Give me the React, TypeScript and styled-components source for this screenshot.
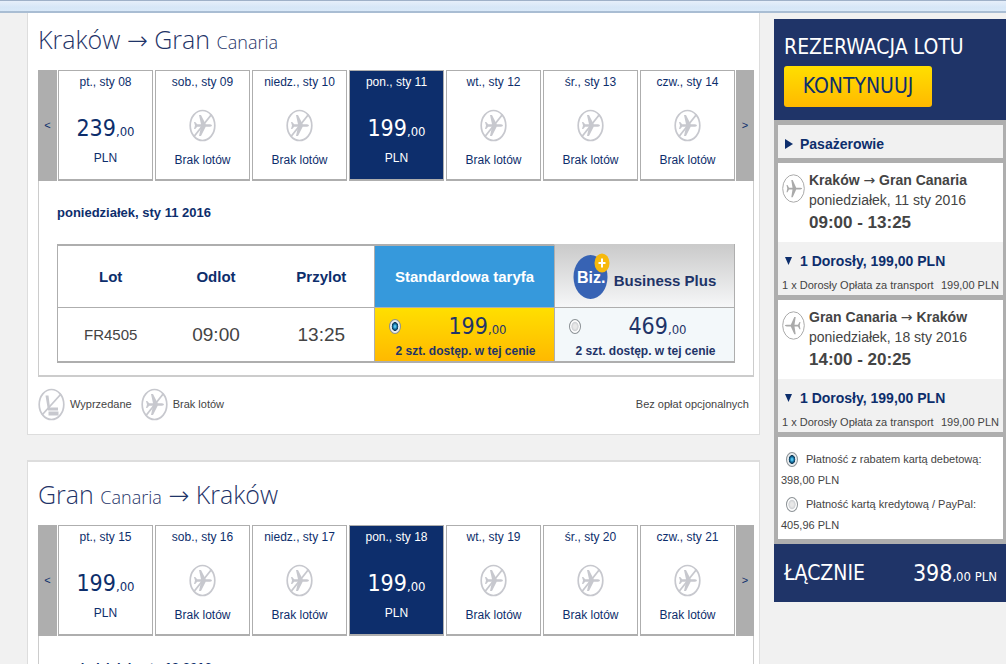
import React, { useState } from "react";
import styled, { createGlobalStyle, css } from "styled-components";

const navy = "#0d2e6c";
const panelNavy = "#1f3468";
const grey = "#aeaeae";
const ink = "#444";
const sans = `"Liberation Sans", Arial, sans-serif`;
const display = `"DejaVu Sans Condensed", "DejaVu Sans", Verdana, sans-serif`;

const GlobalStyle = createGlobalStyle`
  *, *::before, *::after { box-sizing: border-box; }
  html { scrollbar-width: none; }
  body { margin: 0; background: #f1f1f1; color: ${ink}; font: 12px/16px ${sans}; }
  button { font: inherit; color: inherit; margin: 0; padding: 0; border: 0; background: none; cursor: pointer; }
  h1, h2, h3, p { margin: 0; font-weight: normal; }
  svg { flex: none; }
`;

const BrowserEdge = styled.div`
  height: 13px;
  border-top: 1px solid #9fb1c8;
  border-bottom: 2px solid #a9bdd3;
  background: linear-gradient(#e6effa, #d7e7f7 60%, #d9e9f9);
`;

const Page = styled.div`
  display: grid;
  grid-template-columns: minmax(0, 1fr) 232px;
  column-gap: 14px;
  align-items: start;
  padding-left: 27px;
`;

const Flights = styled.main`
  display: flex;
  flex-direction: column;
  gap: 25px;
`;

const Card = styled.section<{ $clipped?: boolean }>`
  padding: ${(p) => (p.$clipped ? "5px" : "11px")} 5px 13px 10px;
  border: 1px solid #ddd;
  border-top: ${(p) => (p.$clipped ? "0" : "2px solid #ddd")};
  background: #fff;
`;

const Route = styled.h2`
  height: 52px;
  color: ${panelNavy};
  font: 300 25px/42px "Open Sans", "Noto Sans", sans-serif;
  white-space: nowrap;
  small { font-size: 18px; }
`;

const Arrow = styled.span`
  font-family: "DejaVu Sans", "Liberation Sans", sans-serif;
  font-weight: 200;
  line-height: 1;
`;

const Days = styled.div`
  display: grid;
  grid-template-columns: 19px minmax(0, 1fr) 18px;
  column-gap: 1px;
  height: 111px;
`;

const DayList = styled.div`
  display: grid;
  grid-template-columns: repeat(7, minmax(0, 1fr));
  column-gap: 2px;
`;

const Shift = styled.button`
  padding-bottom: 2px;
  background: ${grey};
  color: ${navy};
  font-size: 11px;
`;

const Day = styled.button<{ $active?: boolean }>`
  display: flex;
  flex-direction: column;
  align-items: center;
  padding-top: 3px;
  border: 1px solid ${grey};
  border-bottom-width: 2px;
  color: ${(p) => (p.$active ? "#fff" : navy)};
  background: ${(p) => (p.$active ? navy : "#fff")};
`;

const DayPrice = styled.span`
  display: flex;
  flex-direction: column;
  align-items: center;
  gap: 6px;
  padding-top: 22px;
`;

const Closed = styled.span`
  display: flex;
  flex-direction: column;
  align-items: center;
  gap: 10px;
  padding-top: 19px;
`;

const Amount = styled.span`
  font: 23px/32px ${display};
  white-space: nowrap;
  small { font-size: 13px; line-height: 1; }
`;

const Details = styled.div`
  padding: 24px 18px 12px;
  border: 1px solid #ccc;
  border-top: 0;
  border-bottom-width: 2px;
`;

const DateTitle = styled.h3`
  margin-bottom: 23px;
  color: ${navy};
  font: bold 13px/16px ${sans};
`;

const FareTable = styled.table`
  width: 100%;
  table-layout: fixed;
  border-collapse: separate;
  border-spacing: 0;
  border: 1px solid ${grey};
  border-top: 0;
  border-bottom-width: 2px;
  th, td { padding: 0; text-align: center; }
  th {
    height: 64px;
    border-top: 2px solid ${grey};
    border-bottom: 1px solid ${grey};
    color: ${navy};
    font-size: 15px;
    white-space: nowrap;
  }
  td { height: 53px; font-size: 19px; }
`;

const fareEdge = css`border-left: 1px solid ${grey};`;

const StandardHead = styled.th`
  ${fareEdge}
  && { color: #fff; }
  background: #3699dc;
`;

const BusinessHead = styled.th`
  ${fareEdge}
  && { border-top-color: #cbcbcb; color: ${panelNavy}; }
  background: linear-gradient(#cbcbcb, #f6f7f8);
`;

const BusinessTitle = styled.span`
  display: flex;
  align-items: center;
  justify-content: center;
  gap: 4px;
  span { padding-top: 8px; }
`;

const FareCell = styled.td<{ $picked?: boolean }>`
  ${fareEdge}
  color: ${panelNavy};
  background: ${(p) => (p.$picked ? "linear-gradient(#ffdf00, #ffb900)" : "#f3f8fa")};
`;

const FlightNo = styled.td`
  && { font-size: 15px; }
`;

const FareLabel = styled.label`
  display: grid;
  grid-template-columns: 12px 1fr;
  grid-template-rows: 32px 18px;
  padding: 1px 0 0 14px;
  align-items: center;
  cursor: pointer;
  strong { grid-column: 1 / 3; padding-right: 12px; font-size: 12px; line-height: 18px; white-space: nowrap; }
`;

const Radio = styled.input.attrs({ type: "radio" })`
  appearance: none;
  flex: none;
  width: 12px;
  height: 15px;
  margin: 0;
  border: 1px solid #8c9296;
  border-radius: 50%;
  background: radial-gradient(closest-side, #e8e8e8 0 30%, #cfd1d4 65%, #fff 80%);
  &:checked {
    background: radial-gradient(closest-side, #55c4ee 0 15%, #126e9f 40%, #123650 62%, #e9edf0 72%);
  }
`;

const Legend = styled.div`
  display: flex;
  align-items: center;
  padding: 10px 5px 0 0;
  height: 44px;
  font-size: 11px;
`;

const LegendItem = styled.span`
  display: flex;
  align-items: center;
  gap: 5px;
  margin-right: 9px;
`;

const Note = styled.span`
  margin-left: auto;
`;

const Sidebar = styled.aside`
  margin-top: 6px;
`;

const BookingHead = styled.header`
  height: 101px;
  padding: 13px 10px;
  background: ${panelNavy};
  color: #fff;
`;

const BookingTitle = styled.h1`
  margin-bottom: 4px;
  font: 21px/30px ${display};
  white-space: nowrap;
`;

const Continue = styled.button`
  width: 148px;
  height: 41px;
  border-radius: 3px;
  background: linear-gradient(#ffdf00, #ffb900);
  color: ${navy};
  font: 21px/41px ${display};
`;

const Summary = styled.div`
  display: flex;
  flex-direction: column;
  gap: 5px;
  padding: 5px 3px 5px 4px;
  background: ${grey};
`;

const Block = styled.div`
  background: #fff;
`;

const Toggle = styled.button`
  display: flex;
  align-items: center;
  gap: 7px;
  width: 100%;
  height: 33px;
  padding: 5px 7px 0;
  background: #f1f1f1;
  color: ${navy};
  font-size: 14px;
  font-weight: bold;
  line-height: 20px;
`;

const Leg = styled.div`
  display: flex;
  gap: 4px;
  height: 79px;
  padding: 7px 4px;
  svg { margin-top: 4px; }
`;

const LegText = styled.div`
  font-size: 14px;
  line-height: 20px;
  white-space: nowrap;
  h3 { font-size: 14px; font-weight: bold; }
  time { display: block; font-size: 17px; line-height: 26px; font-weight: bold; }
  ${Arrow} { font-weight: normal; }
`;

const Fee = styled.p`
  display: flex;
  justify-content: space-between;
  height: 20px;
  padding: 2px 4px;
  background: #f1f1f1;
  font-size: 11px;
  white-space: nowrap;
`;

const Payments = styled.div`
  height: 102px;
  padding: 12px 3px 0;
`;

const Payment = styled.label`
  display: block;
  height: 45px;
  line-height: 21px;
  white-space: nowrap;
  font-size: 11px;
  cursor: pointer;
`;

const PaymentName = styled.span`
  display: flex;
  align-items: center;
  gap: 8px;
  padding-left: 5px;
`;

const Total = styled.footer`
  display: flex;
  justify-content: space-between;
  align-items: center;
  height: 58px;
  padding: 0 9px 0 10px;
  background: ${panelNavy};
  color: #fff;
  font: 21px/32px ${display};
`;

const NoFlightIcon = () => (
  <svg width="27" height="33" viewBox="0 0 27 33" fill="none" aria-hidden="true">
    <ellipse cx="13.5" cy="16.5" rx="12.3" ry="15" stroke="#c7c8ce" strokeWidth="1.7" />
    <path d="M5 27.5 22.5 5.5" stroke="#c7c8ce" strokeWidth="1.8" />
    <path d="M5 13h1.200l2 2.300h3.800L10 6h2l4.700 9.300h4.300q2 .3 2 1.200t-2 1.200h-4.300L12 27h-2l2-9.300H8.200l-2 2.300H5l1-3.500z" fill="#c7c8ce" />
  </svg>
);

const SoldOutIcon = () => (
  <svg width="27" height="33" viewBox="0 0 27 33" fill="none" aria-hidden="true">
    <ellipse cx="13.5" cy="16.5" rx="12.3" ry="15" stroke="#c7c8ce" strokeWidth="1.7" />
    <path d="M4 27 23 6" stroke="#c7c8ce" strokeWidth="1.8" />
    <path d="M7.500 7.500h3l1.500 12h8v3h-10z" fill="#c7c8ce" />
    <path d="M10.500 23.500h10v4h-10z" fill="#c7c8ce" />
  </svg>
);

const PlaneIcon = ({ back }: { back?: boolean }) => (
  <svg width="23" height="29" viewBox="0 0 23 29" fill="none" aria-hidden="true">
    <ellipse cx="11.5" cy="14.5" rx="10.8" ry="13.7" stroke="#aaa" />
    <path
      transform={back ? "matrix(-1 0 0 1 23 0)" : undefined}
      d="M4.500 11h1l1.500 2.800h3.500L9.300 6h1.400l3.500 7.800h4q2 0 2 .8t-2 .8h-4l-3.500 7.800H9.300l1.200-7.800H7l-1.500 2.800h-1l.8-3.600z"
      fill="#aaa"
    />
  </svg>
);

const BizBadge = () => (
  <svg width="37" height="47" viewBox="0 0 37 47" role="img" aria-label="Biz+">
    <ellipse cx="17.5" cy="24" rx="17" ry="22" fill="#3763b4" />
    <text x="4" y="30" fill="#fff" fontFamily="Liberation Sans, Arial, sans-serif" fontWeight="bold" fontSize="16">Biz.</text>
    <ellipse cx="29" cy="10" rx="7.5" ry="9.5" fill="#f7b90c" />
    <path d="M29 5.500v9M25.500 10h7" stroke="#fff" strokeWidth="2" />
  </svg>
);

type DayInfo = { label: string; price?: string };

const outbound: DayInfo[] = [
  { label: "pt., sty 08", price: "239" },
  { label: "sob., sty 09" },
  { label: "niedz., sty 10" },
  { label: "pon., sty 11", price: "199" },
  { label: "wt., sty 12" },
  { label: "śr., sty 13" },
  { label: "czw., sty 14" },
];

const inbound: DayInfo[] = [
  { label: "pt., sty 15", price: "199" },
  { label: "sob., sty 16" },
  { label: "niedz., sty 17" },
  { label: "pon., sty 18", price: "199" },
  { label: "wt., sty 19" },
  { label: "śr., sty 20" },
  { label: "czw., sty 21" },
];

const DayPicker = ({ days }: { days: DayInfo[] }) => (
  <Days>
    <Shift type="button">&lt;</Shift>
    <DayList>
      {days.map((d, i) => (
        <Day key={d.label} type="button" $active={i === 3}>
          {d.label}
          {d.price ? (
            <DayPrice>
              <Amount>{d.price}<small>,00</small></Amount>
              <span>PLN</span>
            </DayPrice>
          ) : (
            <Closed>
              <NoFlightIcon />
              <span>Brak lotów</span>
            </Closed>
          )}
        </Day>
      ))}
    </DayList>
    <Shift type="button">&gt;</Shift>
  </Days>
);

const Marker = ({ open }: { open?: boolean }) => (
  <svg width="8" height="10" viewBox="0 0 8 10" aria-hidden="true">
    <path d={open ? "M0 1h7L3.500 9z" : "M0 0v10l8-5z"} fill={navy} />
  </svg>
);

type LegProps = { from: string; to: string; date: string; hours: string; back?: boolean };

const LegSummary = ({ from, to, date, hours, back }: LegProps) => (
  <Block>
    <Leg>
      <PlaneIcon back={back} />
      <LegText>
        <h3>{from} <Arrow>→</Arrow> {to}</h3>
        <p>{date}</p>
        <time>{hours}</time>
      </LegText>
    </Leg>
    <Toggle type="button"><Marker open />1 Dorosły, 199,00 PLN</Toggle>
    <Fee><span>1 x Dorosły Opłata za transport</span><span>199,00 PLN</span></Fee>
  </Block>
);

const FareCol = styled.col`
  width: 180px;
`;

const fares = [
  { id: "standard", price: "199" },
  { id: "business", price: "469" },
];

export default function App() {
  const [fare, setFare] = useState("standard");
  const [payment, setPayment] = useState("debit");

  return (
    <>
      <GlobalStyle />
      <BrowserEdge />
      <Page>
        <Flights>
          <Card $clipped>
            <Route>Kraków <Arrow>→</Arrow> Gran <small>Canaria</small></Route>
            <DayPicker days={outbound} />
            <Details>
              <DateTitle>poniedziałek, sty 11 2016</DateTitle>
              <FareTable>
                <colgroup>
                  <col />
                  <col />
                  <col />
                  <FareCol />
                  <FareCol />
                </colgroup>
                <thead>
                  <tr>
                    <th scope="col">Lot</th>
                    <th scope="col">Odlot</th>
                    <th scope="col">Przylot</th>
                    <StandardHead scope="col">Standardowa taryfa</StandardHead>
                    <BusinessHead scope="col">
                      <BusinessTitle><BizBadge /><span>Business Plus</span></BusinessTitle>
                    </BusinessHead>
                  </tr>
                </thead>
                <tbody>
                  <tr>
                    <FlightNo>FR4505</FlightNo>
                    <td>09:00</td>
                    <td>13:25</td>
                    {fares.map((f) => (
                      <FareCell key={f.id} $picked={fare === f.id}>
                        <FareLabel>
                          <Radio name="fare" checked={fare === f.id} onChange={() => setFare(f.id)} />
                          <Amount>{f.price}<small>,00</small></Amount>
                          <strong>2 szt. dostęp. w tej cenie</strong>
                        </FareLabel>
                      </FareCell>
                    ))}
                  </tr>
                </tbody>
              </FareTable>
            </Details>
            <Legend>
              <LegendItem><SoldOutIcon />Wyprzedane</LegendItem>
              <LegendItem><NoFlightIcon />Brak lotów</LegendItem>
              <Note>Bez opłat opcjonalnych</Note>
            </Legend>
          </Card>
          <Card>
            <Route>Gran <small>Canaria</small> <Arrow>→</Arrow> Kraków</Route>
            <DayPicker days={inbound} />
            <Details>
              <DateTitle>poniedziałek, sty 18 2016</DateTitle>
            </Details>
          </Card>
        </Flights>
        <Sidebar>
          <BookingHead>
            <BookingTitle>REZERWACJA LOTU</BookingTitle>
            <Continue type="button">KONTYNUUJ</Continue>
          </BookingHead>
          <Summary>
            <Toggle type="button"><Marker />Pasażerowie</Toggle>
            <LegSummary from="Kraków" to="Gran Canaria" date="poniedziałek, 11 sty 2016" hours="09:00 - 13:25" />
            <LegSummary from="Gran Canaria" to="Kraków" date="poniedziałek, 18 sty 2016" hours="14:00 - 20:25" back />
            <Block>
              <Payments>
                <Payment>
                  <PaymentName>
                    <Radio name="payment" checked={payment === "debit"} onChange={() => setPayment("debit")} />
                    Płatność z rabatem kartą debetową:
                  </PaymentName>
                  398,00 PLN
                </Payment>
                <Payment>
                  <PaymentName>
                    <Radio name="payment" checked={payment === "credit"} onChange={() => setPayment("credit")} />
                    Płatność kartą kredytową / PayPal:
                  </PaymentName>
                  405,96 PLN
                </Payment>
              </Payments>
            </Block>
          </Summary>
          <Total>
            <span>ŁĄCZNIE</span>
            <Amount>398<small>,00 PLN</small></Amount>
          </Total>
        </Sidebar>
      </Page>
    </>
  );
}
